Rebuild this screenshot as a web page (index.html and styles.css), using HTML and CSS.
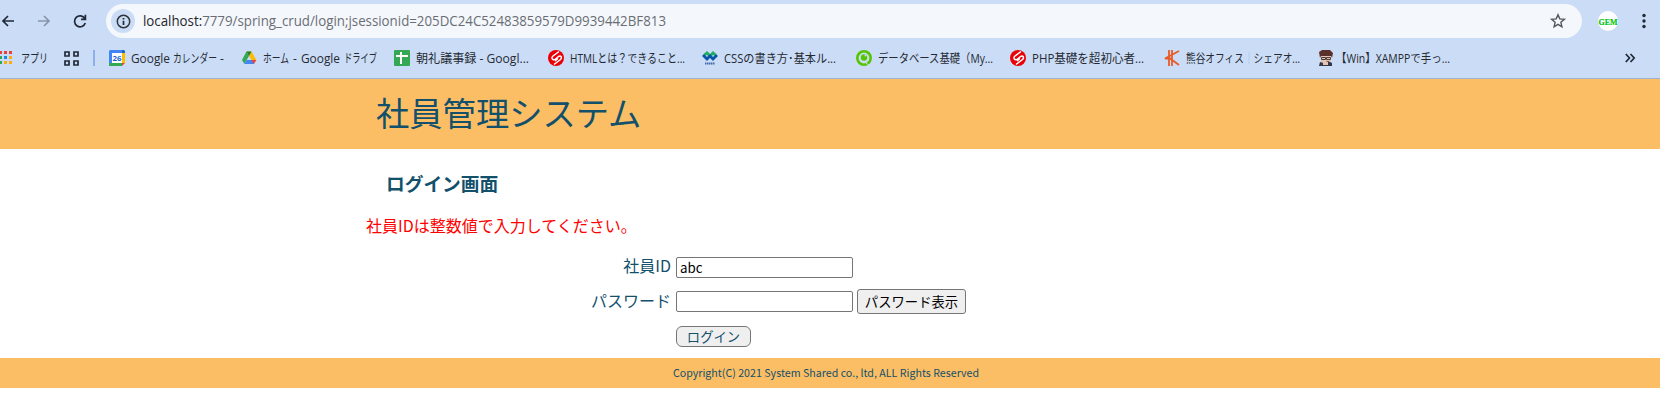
FILE: index.html
```
<!DOCTYPE html>
<html lang="ja">
<head>
<meta charset="utf-8">
<title>社員管理システム</title>
<link rel="stylesheet" href="styles.css">
</head>
<body>
<div class="browser">
  <div class="toolbar">
    <svg class="back" width="14" height="16" viewBox="0 0 14 16"><path d="M14 8H3M8 3 3 8l5 5"/></svg>
    <svg class="forward" width="14" height="16" viewBox="0 0 14 16"><path d="M0 8h11M6 3l5 5-5 5"/></svg>
    <svg class="reload" width="14" height="14" viewBox="0 0 14 14"><path d="M11.8 4.5A5.5 5.5 0 1 0 12.3 9M12.4.8v4.5H8"/></svg>
    <div class="address">
      <span class="info"><svg width="15" height="15" viewBox="0 0 15 15"><circle cx="7.5" cy="7.5" r="6.2"/><path d="M7.5 6.8V11M7.5 4v1.5"/></svg></span>
      <svg class="url" width="524" height="24"><text x="0" y="17" textLength="523" lengthAdjust="spacingAndGlyphs"><tspan class="host">localhost:</tspan>7779/spring_crud/login;jsessionid=205DC24C52483859579D9939442BF813</text></svg>
      <svg class="star" width="16" height="16" viewBox="0 0 16 16"><path d="m8 1.700 1.800 4.200 4.600.400-3.500 3 1 4.500L8 11.400l-3.900 2.400 1-4.500-3.500-3 4.600-.400z"/></svg>
    </div>
    <svg class="profile" width="20" height="20" viewBox="0 0 20 20"><circle cx="10" cy="10" r="10"/><text x="0.500" y="13.500" textLength="19" lengthAdjust="spacingAndGlyphs">GEM</text></svg>
    <svg class="more" width="4" height="16" viewBox="0 0 4 16"><circle cx="2" cy="2.500" r="1.700"/><circle cx="2" cy="8" r="1.700"/><circle cx="2" cy="13.500" r="1.700"/></svg>
  </div>
  <div class="bookmarks">
    <svg class="apps" width="12" height="14" viewBox="0 0 12 14"><path fill="#ea4335" d="M0 0h2v3H0zM4 0h3v3H4zM9 0h3v3H9z"/><path fill="#34a853" d="M0 5h2v3H0z"/><path fill="#1a88e8" d="M4 5h3v3H4z"/><path fill="#fbad10" d="M9 5h3v3H9zM4 10h3v3H4zM9 10h3v3H9z"/><path fill="#34a853" d="M0 10h2v3H0z"/></svg>
    <svg class="label apps-label" width="43" height="20"><text x="0" y="15" textLength="27" lengthAdjust="spacingAndGlyphs">アプリ</text></svg>
    <svg class="grid" width="15" height="15" viewBox="0 0 15 15"><path d="M1 1h4v4H1zM10 1h4v4h-4zM1 10h4v4H1zM10 10h4v4h-4z"/></svg>
    <span class="divider"></span>
    <svg class="icon" viewBox="0 0 16 16"><path fill="#4285f4" d="M1 0h12v16H0V1z"/><path fill="#1967d2" d="M13 0h2l1 1v2h-3z"/><path fill="#fbbc04" d="M13 3h3v10h-3z"/><path fill="#34a853" d="M0 13h13v3H1l-1-1z"/><path fill="#ea4335" d="M13 13h3l-3 3z"/><path fill="#fff" d="M3 3h10v10H3z"/><text class="day" x="3.500" y="10.700" textLength="9" lengthAdjust="spacingAndGlyphs">26</text></svg>
    <svg class="label" width="110" height="20"><text x="0" y="15" textLength="39" lengthAdjust="spacingAndGlyphs">Google</text><text x="42" y="15" textLength="44" lengthAdjust="spacingAndGlyphs">カレンダー</text><text x="89" y="15">-</text></svg>
    <svg class="icon" viewBox="0 0 16 16"><path fill="#34a853" d="M5.500 1.500 8 6 3.400 14 1 10z"/><path fill="#fbbc04" d="M5.500 1.500h5L15.300 10h-4.900z"/><path fill="#4285f4" d="M5.700 10h7.300v4H3.400z"/><path fill="#188038" d="M5.500 1.500h5L8 6z"/><path fill="#ea4335" d="M10.400 10h4.900L13 14z"/></svg>
    <svg class="label" width="131" height="20"><text x="0" y="15" textLength="26" lengthAdjust="spacingAndGlyphs">ホーム</text><text x="30" y="15">-</text><text x="38" y="15" textLength="39" lengthAdjust="spacingAndGlyphs">Google</text><text x="81" y="15" textLength="33" lengthAdjust="spacingAndGlyphs">ドライブ</text></svg>
    <svg class="icon" viewBox="0 0 16 16"><rect width="16" height="16" rx="1" fill="#34a853"/><path fill="#fff" d="M6 2h2v3h6v2H8v7H6V7H2V5h4z"/></svg>
    <svg class="label" width="132" height="20"><text x="0" y="15" textLength="113" lengthAdjust="spacingAndGlyphs">朝礼議事録 - Googl...</text></svg>
    <svg class="icon" viewBox="0 0 16 16"><circle cx="8" cy="8" r="8" fill="#eb0008"/><path class="swirl" d="M11 1.500 5 6C2.500 8 5 11 7.500 9l3-2.500c2.500-1.500 4 1 2 3L6 14.500M7 11l3-2.500"/></svg>
    <svg class="label" width="132" height="20"><text x="0" y="15" textLength="115" lengthAdjust="spacingAndGlyphs">HTMLとは？できること...</text></svg>
    <svg class="icon" viewBox="0 0 16 16"><path class="weave" stroke="#21ad62" d="m2.500 5 2.500-2 3 3 3-3 2.500 2"/><path class="weave" stroke="#0755a8" d="m1 5 4 4 3-3 3 3 4-4"/><path stroke="#4268ad" stroke-width="2" d="M3 13.500h10" stroke-dasharray="1.500 .5"/></svg>
    <svg class="label" width="132" height="20"><text x="0" y="15" textLength="112" lengthAdjust="spacingAndGlyphs">CSSの書き方･基本ル...</text></svg>
    <svg class="icon" viewBox="0 0 16 16"><circle cx="8" cy="8" r="6.700" fill="none" stroke="#55c500" stroke-width="2.600"/><circle cx="8" cy="7.500" r="3.200" fill="#55c500"/><path stroke="#cbdcf6" d="m10 13 4 3"/><circle cx="9.500" cy="5.500" r="1" fill="#cbdcf6"/></svg>
    <svg class="label" width="132" height="20"><text x="0" y="15" textLength="115" lengthAdjust="spacingAndGlyphs">データベース基礎（My...</text></svg>
    <svg class="icon" viewBox="0 0 16 16"><circle cx="8" cy="8" r="8" fill="#eb0008"/><path class="swirl" d="M11 1.500 5 6C2.500 8 5 11 7.500 9l3-2.500c2.500-1.500 4 1 2 3L6 14.500M7 11l3-2.500"/></svg>
    <svg class="label" width="132" height="20"><text x="0" y="15" textLength="112" lengthAdjust="spacingAndGlyphs">PHP基礎を超初心者...</text></svg>
    <svg class="icon" viewBox="0 0 16 16"><path class="kuma" d="M5 0v16M8 0v16M15 1 1 8.500h5L15 15"/></svg>
    <svg class="label" width="132" height="20"><text x="0" y="15" textLength="114" lengthAdjust="spacingAndGlyphs">熊谷オフィス<tspan class="bar">｜</tspan>シェアオ...</text></svg>
    <svg class="icon" viewBox="0 0 16 16"><path fill="#e6c2b0" d="M3 5h10v7H3z"/><path fill="#5a302c" d="M1 2 4 0h8l3 3-1 5-1-2H3L2 8z"/><path stroke="#493a3a" fill="none" d="M3.500 7.500h4v2h-4zM8.500 7.500h4v2h-4z"/><path fill="#343746" d="m2 12 4 1 4-2 4 2v3H1z"/><path fill="#e6c2b0" d="M5 12h5v3H5z"/></svg>
    <svg class="label" width="112" height="20"><text x="-4" y="15" textLength="114" lengthAdjust="spacingAndGlyphs">【Win】XAMPPで手っ...</text></svg>
    <svg class="overflow" width="10" height="10" viewBox="0 0 10 10"><path d="m.8 1 3.700 4L.8 9M5.500 1l3.700 4-3.700 4"/></svg>
  </div>
</div>
<header class="site-header"><h1>社員管理システム</h1></header>
<main class="content">
  <h3>ログイン画面</h3>
  <p class="error">社員IDは整数値で入力してください。</p>
  <form class="login">
    <label for="empId">社員ID</label><input id="empId" type="text" value="abc">
    <label for="password">パスワード</label><div class="password-row"><input id="password" type="password"><button class="toggle" type="button">パスワード表示</button></div>
    <button class="submit" type="button">ログイン</button>
  </form>
</main>
<footer class="site-footer">Copyright(C) 2021 System Shared co., ltd, ALL Rights Reserved</footer>
</body>
</html>
```
FILE: styles.css
```
* { box-sizing: border-box; }
body { margin: 0; background: #fff; color: #12506b; font-family: "Noto Sans CJK JP", sans-serif; font-size: 16px; overflow: hidden; }
svg { display: block; flex: none; overflow: visible; }
.browser { height: 79px; background: #cbdcf6; border-bottom: 1px solid #9fb2d2; }
.toolbar { display: flex; align-items: center; height: 42px; }
.toolbar path, .grid path, .overflow path { fill: none; stroke: #202936; stroke-width: 1.7; }
.forward { margin-left: 24px; }
.toolbar .forward path { stroke: #8995a8; }
.reload { margin-left: 21px; }
.address { display: flex; align-items: center; width: 1476px; height: 34px; margin-left: 19px; padding-left: 5px; border-radius: 17px; background: #f4f7fc; }
.info { display: flex; align-items: center; justify-content: center; width: 24px; height: 24px; border-radius: 50%; background: #cbdcf6; }
.info circle { fill: none; stroke: #30343c; stroke-width: 1.5; }
.url { margin-left: 8px; font: 14px "Open Sans", sans-serif; fill: #6a6e74; }
.host { fill: #24272c; }
.star { margin-left: 883px; }
.toolbar .star path { stroke: #53565b; stroke-width: 1.4; }
.profile { margin-left: 16px; }
.profile text { font: bold 9px "Liberation Serif", serif; fill: #00c412; stroke: #00c412; stroke-width: .2; }
.profile circle { fill: #fff; }
.more { margin-left: 24px; fill: #202936; }
.bookmarks { display: flex; align-items: center; height: 32px; }
.apps-label { margin-left: 9px; }
.label { font: 12px "Open Sans", "Noto Sans CJK JP", sans-serif; fill: #252a32; }
.label .bar { fill: #8fc3dc; }
.icon { width: 16px; height: 16px; margin-right: 6px; }
.divider { width: 2px; height: 16px; margin: 0 14px 0 14px; background: #8db0ed; }
.day { font: bold 7px "Open Sans", sans-serif; fill: #1967d2; }
.swirl { fill: none; stroke: #fff; stroke-width: 1.5; }
.weave { fill: none; stroke-width: 2.8; }
.kuma { fill: none; stroke: #e85b28; stroke-width: 1.8; }
.overflow { margin-left: 173px; }
.site-header { height: 70px; background: #fcbe64; }
.site-header h1 { width: 920px; margin: 0 auto; padding-left: 6px; font-size: 33.3px; font-weight: 400; line-height: 66px; }
.content { width: 928px; height: 209px; margin: 0 auto; }
h3 { margin: 0; padding: 20px 0 0 20px; font-size: 18.72px; line-height: 28px; }
.error { margin: 16px 0 0; color: #f00; line-height: 24px; }
.login { display: grid; grid-template-columns: 305px 1fr; grid-template-rows: 35px 35px 22px; column-gap: 5px; margin-top: 15px; }
.login label { text-align: right; line-height: 34px; white-space: nowrap; margin-top: -4px; }
input { width: 177px; height: 21px; padding: 1px 3px; border: 1px solid #767676; border-radius: 2px; font: 13.333px "Noto Sans CJK JP", sans-serif; color: #000; }
.login > input { margin-top: 5px; }
.password-row { display: flex; align-items: center; gap: 4px; height: 25px; margin-top: 2px; }
button { padding: 0; border: 1px solid #767676; border-radius: 3px; background: #efefef; font: 13.333px "Noto Sans CJK JP", sans-serif; }
.toggle { width: 109px; height: 25px; color: #000; }
.submit { grid-column: 2; width: 75px; height: 21px; margin-top: 4px; border-radius: 6px; color: #12506b; line-height: 18px; }
.site-footer { height: 30px; background: #fcbe64; padding-right: 8px; text-align: center; font-size: 10.667px; line-height: 30px; }
```
